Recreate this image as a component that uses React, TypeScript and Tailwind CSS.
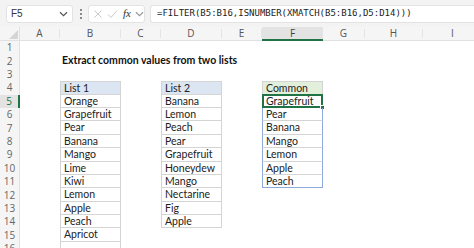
import React from "react";

const cols = ["A", "B", "C", "D", "E", "F", "G", "H", "I"];

const list1 = ["Orange", "Grapefruit", "Pear", "Banana", "Mango", "Lime", "Kiwi", "Lemon", "Apple", "Peach", "Apricot", ""];
const list2 = ["Banana", "Lemon", "Peach", "Pear", "Grapefruit", "Honeydew", "Mango", "Nectarine", "Fig", "Apple"];
const common = ["Grapefruit", "Pear", "Banana", "Mango", "Lemon", "Apple", "Peach"];

const cellFont = { fontFamily: "Lato, 'Open Sans', sans-serif" };

function Chevron({ className }: { className?: string }) {
  return (
    <svg width="9" height="6" viewBox="0 0 9 6" className={className}>
      <path d="M1 1.2 L4.5 4.6 L8 1.2" fill="none" stroke="currentColor" strokeWidth="1.2" />
    </svg>
  );
}

function FormulaBar() {
  return (
    <div className="flex h-[27px] items-center bg-[#f3f3f3] pl-[6px]">
      <div className="flex h-[18px] w-[67px] items-center justify-between rounded-[3px] border border-[#e3e3e3] bg-white pl-[4px] pr-[4px]">
        <span className="text-[10px] text-[#333]" style={{ fontFamily: "'Liberation Sans', sans-serif" }}>F5</span>
        <Chevron className="text-[#555]" />
      </div>
      <div className="flex w-[15px] flex-col items-center gap-[2px]">
        <span className="h-[2px] w-[2px] rounded-full bg-[#666]" />
        <span className="h-[2px] w-[2px] rounded-full bg-[#666]" />
        <span className="h-[2px] w-[2px] rounded-full bg-[#666]" />
      </div>
      <div className="flex h-[18px] w-[57px] items-center gap-[4px] rounded-[3px] border border-[#e3e3e3] bg-white pl-[4px]">
        <svg width="10" height="10" viewBox="0 0 10 10">
          <path d="M1.5 1.5 L8.5 8.5 M8.5 1.5 L1.5 8.5" stroke="#c9c9c9" strokeWidth="1" />
        </svg>
        <svg width="11" height="10" viewBox="0 0 11 10">
          <path d="M1 5.5 L4 8.5 L10 1.5" fill="none" stroke="#c9c9c9" strokeWidth="1" />
        </svg>
        <span className="ml-[1px] text-[11px] italic text-[#333]" style={{ fontFamily: "'Liberation Serif', serif" }}>
          fx
        </span>
        <Chevron className="text-[#999]" />
      </div>
      <div className="ml-[5px] flex h-[18px] flex-1 items-center rounded-l-[3px] border border-r-0 border-[#e3e3e3] bg-white pl-[6px]">
        <span className="whitespace-nowrap text-[9px] text-[#222]" style={{ fontFamily: "'DejaVu Sans Mono', 'Liberation Mono', monospace" }}>
          =FILTER(B5:B16,ISNUMBER(XMATCH(B5:B16,D5:D14)))
        </span>
      </div>
    </div>
  );
}

function ListCell({ text, head, fill, first }: { text: string; head?: boolean; fill?: string; first?: boolean }) {
  return (
    <div
      className={`truncate border-x border-b border-[#d4d4d4] pl-[3px] text-[10.5px] leading-[12.4px] text-[#222] ${first ? "border-t" : ""} ${head ? fill : "bg-white"}`}
      style={cellFont}
    >
      {text}
    </div>
  );
}

function CommonCell({ text, r }: { text: string; r: number }) {
  return (
    <div
      className={`relative border-x border-b border-x-[#8ea9db] pl-[3px] text-[10.5px] leading-[12.4px] text-[#222] ${
        r === 11 ? "border-b-[#8ea9db]" : "border-b-[#d4d4d4]"
      }`}
      style={cellFont}
    >
      {text}
      {r === 5 && (
        <>
          <div className="absolute -left-px -top-px bottom-[-1px] right-[-1px] border-2 border-[#217346]" />
          <div className="absolute bottom-[-3px] right-[-3px] h-[5px] w-[5px] border border-white bg-[#217346]" />
        </>
      )}
    </div>
  );
}

export default function App() {
  const rows = Array.from({ length: 16 }, (_, i) => i + 1);
  return (
    <div className="h-[248px] w-[474px] overflow-hidden bg-white">
      <FormulaBar />
      <div className="grid grid-cols-[20px_40px_61px_40px_61px_40px_61px_42px_58px_60px] grid-rows-[14px] auto-rows-[13.4px]">
        <div className="relative border-b border-r border-[#e1e1e1] bg-[#f5f5f5]">
          <svg width="9" height="9" viewBox="0 0 10 10" className="absolute bottom-[1px] right-[1px]">
            <path d="M10 0 L10 10 L0 10 Z" fill="#d5d5d5" />
          </svg>
        </div>
        {cols.map((c) => (
          <div
            key={c}
            className={`flex items-center justify-center text-[10px] ${
              c === "F"
                ? "border-b-2 border-[#217346] bg-[#e3e3e3] text-[#444]"
                : "border-b border-[#e1e1e1] bg-[#f5f5f5] text-[#555]"
            }`}
            style={{ fontFamily: "'Open Sans', sans-serif" }}
          >
            <span className={c === "F" ? "" : "w-full border-r border-[#e4e4e4] text-center leading-[9px]"}>{c}</span>
          </div>
        ))}
        {rows.map((r) => {
          const l1 = r >= 4 ? (r === 4 ? "List 1" : list1[r - 5]) : undefined;
          const l2 = r >= 4 && r <= 14 ? (r === 4 ? "List 2" : list2[r - 5]) : undefined;
          const cm = r >= 4 && r <= 11 ? (r === 4 ? "Common" : common[r - 5]) : undefined;
          return (
            <React.Fragment key={r}>
              <div
                className={`flex items-center justify-center text-[10px] ${
                  r === 5 ? "border-r-2 border-[#217346] bg-[#e3e3e3] text-[#217346]" : "border-r border-[#e1e1e1] bg-[#f5f5f5] text-[#666]"
                }`}
                style={{ fontFamily: "'Open Sans', sans-serif" }}
              >
                {r}
              </div>
              <div />
              {r === 2 ? (
                <div className="col-span-5 whitespace-nowrap pl-[2px] text-[10.5px] font-bold leading-[13.4px] text-[#111]" style={cellFont}>
                  Extract common values from two lists
                </div>
              ) : (
                <>
                  {l1 !== undefined ? <ListCell text={l1} head={r === 4} fill="bg-[#dce6f2]" first={r === 4} /> : <div />}
                  <div />
                  {l2 !== undefined ? <ListCell text={l2} head={r === 4} fill="bg-[#dce6f2]" first={r === 4} /> : <div />}
                  <div />
                  {cm === undefined ? (
                    <div />
                  ) : r === 4 ? (
                    <ListCell text={cm} head fill="bg-[#e2efda]" first />
                  ) : (
                    <CommonCell text={cm} r={r} />
                  )}
                </>
              )}
              <div />
              <div />
              <div />
            </React.Fragment>
          );
        })}
      </div>
    </div>
  );
}
